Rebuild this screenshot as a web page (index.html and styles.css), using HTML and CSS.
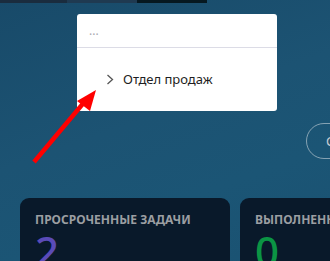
FILE: index.html
```html
<!DOCTYPE html>
<html lang="ru">
<head>
<meta charset="utf-8">
<link rel="stylesheet" href="styles.css">
</head>
<body>
<div class="page">
  <div class="tabs">
    <div class="tab tab-a"></div>
    <div class="tab tab-b"></div>
    <div class="tab tab-c"></div>
  </div>
  <div class="toolbar">
    <button class="pill">Сегодня</button>
  </div>
  <div class="cards">
    <div class="card">
      <div class="card-title">Просроченные задачи</div>
      <div class="card-num num-purple">2</div>
    </div>
    <div class="card">
      <div class="card-title">Выполненные задачи</div>
      <div class="card-num num-green">0</div>
    </div>
  </div>

  <div class="dropdown">
    <div class="dd-input">...</div>
    <div class="dd-list">
      <div class="dd-item">
        <svg class="chev" width="8" height="11" viewBox="0 0 8 11"><path d="M1.5 1 L6.5 5.5 L1.5 10" fill="none" stroke="#555" stroke-width="1.3"/></svg>
        <span>Отдел продаж</span>
      </div>
    </div>
  </div>

  <svg class="arrow" width="330" height="261" viewBox="0 0 330 261">
    <line x1="34" y1="162" x2="86" y2="100" stroke="#ff0000" stroke-width="4.5" stroke-linecap="butt"/>
    <polygon points="96,90 77,101 90,111" fill="#ff0000"/>
  </svg>
</div>
</body>
</html>
```

FILE: styles.css
```css
* { box-sizing: border-box; }
html, body { margin: 0; padding: 0; }
body {
  width: 330px;
  height: 261px;
  overflow: hidden;
  font-family: "Noto Sans", "Open Sans", sans-serif;
}
.page {
  position: relative;
  width: 330px;
  height: 261px;
  overflow: hidden;
  background: linear-gradient(160deg, #184a69 0%, #1c5373 45%, #1b5575 70%, #1a5272 100%);
}
.tabs {
  display: flex;
  height: 3px;
}
.tab-a { width: 67px; background: #1a2c3e; }
.tab-b { width: 70px; background: #1f3a51; }
.tab-c { width: 70px; background: #061820; }

.toolbar {
  display: flex;
  justify-content: flex-end;
  height: 195px;
  padding-top: 120px;
}
.pill {
  height: 36px;
  margin-right: -80px;
  width: 104px;
  border: 1px solid rgba(220, 225, 230, 0.55);
  border-radius: 18px;
  background: transparent;
  color: #c8cdd2;
  font-family: "Noto Sans", sans-serif;
  font-size: 13px;
  text-align: left;
  padding: 0 0 0 19px;
}
.cards {
  display: flex;
  gap: 10px;
  padding-left: 20px;
}
.card {
  flex: 0 0 210px;
  height: 80px;
  background: #09192a;
  border-radius: 9px;
  padding: 14px 15px;
}
.card-title {
  font-size: 12px;
  font-weight: 700;
  text-transform: uppercase;
  color: #9b9ea2;
  white-space: nowrap;
  line-height: 15px;
}
.card-num {
  font-size: 42px;
  line-height: 40px;
  margin-top: 4px;
  font-weight: 500;
}
.num-purple { color: #5a4bb8; }
.num-green { color: #0b9444; }

.dropdown {
  position: absolute;
  left: 77px;
  top: 14px;
  width: 200px;
}
.dd-input {
  height: 34px;
  background: #fff;
  border-radius: 3px 3px 0 0;
  border-bottom: 1px solid #dcdce6;
  color: #a9a9b0;
  font-size: 12px;
  padding: 9px 12px;
  line-height: 16px;
}
.dd-list {
  height: 63px;
  background: #fff;
  border-radius: 0 0 3px 3px;
  padding-top: 22px;
}
.dd-item {
  display: flex;
  align-items: center;
  gap: 9px;
  padding-left: 29px;
  font-size: 13px;
  color: #1e1e22;
  line-height: 18px;
}
.chev { display: block; }
.arrow {
  position: absolute;
  left: 0;
  top: 0;
  pointer-events: none;
}
```
